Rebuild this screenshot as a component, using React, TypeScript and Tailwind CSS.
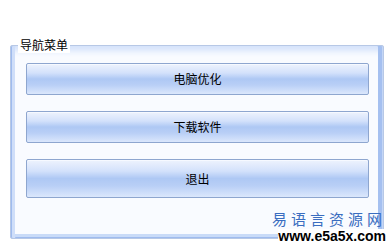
const menuItems = [
  { label: "电脑优化", height: "h-[32px]" },
  { label: "下载软件", height: "h-[32px]" },
  { label: "退出", height: "h-[39px]" },
];

const MenuButton = ({ label, height }: { label: string; height: string }) => (
  <button
    className={`w-full ${height} rounded-[2px] border border-[#8ea6cf] bg-[linear-gradient(to_bottom,#eef3fd_0%,#d3e1fb_30%,#aec8f4_50%,#b9cff6_70%,#dbe7fc_100%)] text-[12px] text-black font-['Noto_Sans_CJK_SC',sans-serif] shadow-[inset_0_1px_0_#f6f9ff]`}
  >
    {label}
  </button>
);

export default function App() {
  return (
    <div className="relative w-[390px] h-[247px] overflow-hidden bg-white font-['Noto_Sans_CJK_SC',sans-serif]">
      <div className="pt-[45px] pl-[10px] pr-[6px]">
        <fieldset className="relative h-[194px] rounded-[2px] border border-[#b7c8e6] bg-[#f9fbff] shadow-[inset_1px_0_0_#9fbbee,inset_4px_0_0_#cfdef9,inset_-1px_0_0_#c4d6f6,inset_-5px_0_0_#a5c0f0,inset_0_-1px_0_#9fbbee,inset_0_-4px_0_#c9dbf8,inset_0_7px_6px_-2px_#d4e2fb]">
          <span className="absolute -top-[9px] left-[7px] bg-white px-[2px] text-[12px] leading-[16px] text-black">
            导航菜单
          </span>
          <div className="flex flex-col gap-[16px] pt-[17px] pl-[15px] pr-[14px]">
            {menuItems.map((item) => (
              <MenuButton key={item.label} label={item.label} height={item.height} />
            ))}
          </div>
        </fieldset>
      </div>

      {/* watermark */}
      <div className="absolute right-[4px] bottom-[4px] flex flex-col items-end gap-[2px]">
        <span className="text-[15px] leading-[17px] tracking-[4px] text-[#3a6dc0] font-['Noto_Sans_CJK_SC',serif]">
          易语言资源网
        </span>
        <span className="bg-white text-[14px] leading-[14px] font-bold text-black font-['Liberation_Sans',Arial,sans-serif]">
          www.e5a5x.com
        </span>
      </div>
    </div>
  );
}
